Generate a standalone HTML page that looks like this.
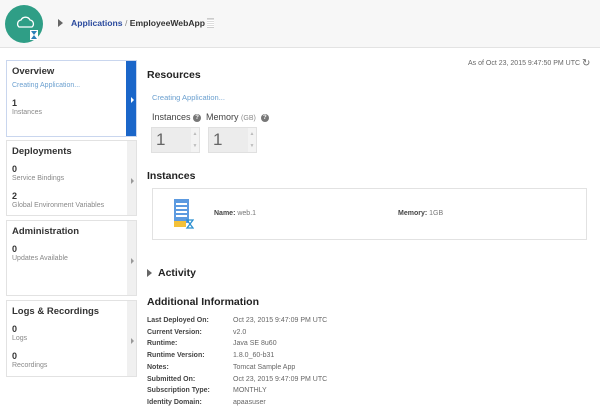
<!DOCTYPE html><html><head><style>
*{margin:0;padding:0;box-sizing:border-box}
body{width:600px;height:413px;overflow:hidden;background:#fff;font-family:"Liberation Sans",Arial,sans-serif;color:#333;position:relative}
.a{position:absolute;white-space:nowrap}
.hdr{position:absolute;left:0;top:0;width:600px;height:48px;background:#f7f7f7;border-bottom:1px solid #e3e3e3}
.card{position:absolute;left:6px;width:131px;border:1px solid #e2e2e2;background:#fff}
.card .strip{position:absolute;right:0;top:0;bottom:0;width:9px;background:#f0f0f0}
.ct{font-size:9.5px;font-weight:bold;color:#333}
.small{font-size:7px;color:#888}
.num{font-size:9px;font-weight:bold;color:#333}
.h{font-size:10.5px;font-weight:bold;color:#222}
.lab{font-size:7px;font-weight:bold;color:#444}
.val{font-size:7px;color:#666}
.spin{position:absolute;width:49px;height:26px;background:#ececec;border:1px solid #e0e0e0;font-size:17px;color:#666;padding:2px 4px}
.arr{position:absolute;right:0;top:0;width:8px;height:24px;background:#f3f3f3;font-size:5px;color:#bbb;text-align:center;line-height:12px}
.q{display:inline-block;width:8px;height:8px;border-radius:50%;background:#777;color:#fff;font-size:6px;text-align:center;line-height:8px;font-weight:bold;vertical-align:middle}
</style></head><body>
<div class="hdr"></div>
<div class="a" style="left:5px;top:5px;width:38px;height:38px;border-radius:50%;background:#2f9e86"></div>
<svg class="a" style="left:14px;top:14px" width="26" height="26" viewBox="0 0 26 26"><path d="M5 13a4 4 0 0 1 2-7a5 5 0 0 1 9 0a4 4 0 0 1 2 7z" fill="none" stroke="#fff" stroke-width="1.3"/><rect x="16" y="16" width="8" height="10" fill="#fff"/><path d="M17 17h6l-3 4l3 4h-6l3-4z" fill="#2a7fb8"/></svg>
<div class="a" style="left:58px;top:19px;width:0;height:0;border-left:5px solid #666;border-top:4px solid transparent;border-bottom:4px solid transparent"></div>
<div class="a" style="left:71px;top:18px;font-size:8.6px"><span style="color:#2a4a9e;font-weight:bold">Applications</span> <span style="color:#888">/</span> <b style="color:#333">EmployeeWebApp</b></div>
<div class="a" style="left:207px;top:18px;width:7px;height:10px;border-top:1px solid #ccc;border-bottom:1px solid #ccc;background:repeating-linear-gradient(#ddd 0 1px,#fff 1px 2px)"></div>

<div class="card" style="top:60px;height:77px;border-color:#c9d6ee"><div class="strip" style="background:#1a66c9;width:10px"></div>
<div class="a" style="right:2px;top:36px;border-left:3px solid #fff;border-top:3px solid transparent;border-bottom:3px solid transparent"></div>
<div class="a ct" style="left:5px;top:5px">Overview</div>
<div class="a small" style="left:5px;top:21px;color:#6a9fcf">Creating Application...</div>
<div class="a num" style="left:5px;top:37px">1</div>
<div class="a small" style="left:5px;top:48px">Instances</div></div>

<div class="card" style="top:140px;height:76px"><div class="strip"></div>
<div class="a" style="right:2px;top:37px;border-left:3px solid #999;border-top:3px solid transparent;border-bottom:3px solid transparent"></div>
<div class="a ct" style="left:5px;top:5px">Deployments</div>
<div class="a num" style="left:5px;top:23px">0</div>
<div class="a small" style="left:5px;top:34px">Service Bindings</div>
<div class="a num" style="left:5px;top:50px">2</div>
<div class="a small" style="left:5px;top:61px">Global Environment Variables</div></div>

<div class="card" style="top:220px;height:76px"><div class="strip"></div>
<div class="a" style="right:2px;top:37px;border-left:3px solid #999;border-top:3px solid transparent;border-bottom:3px solid transparent"></div>
<div class="a ct" style="left:5px;top:5px">Administration</div>
<div class="a num" style="left:5px;top:23px">0</div>
<div class="a small" style="left:5px;top:34px">Updates Available</div></div>

<div class="card" style="top:300px;height:77px"><div class="strip"></div>
<div class="a" style="right:2px;top:37px;border-left:3px solid #999;border-top:3px solid transparent;border-bottom:3px solid transparent"></div>
<div class="a ct" style="left:5px;top:5px">Logs &amp; Recordings</div>
<div class="a num" style="left:5px;top:23px">0</div>
<div class="a small" style="left:5px;top:34px">Logs</div>
<div class="a num" style="left:5px;top:50px">0</div>
<div class="a small" style="left:5px;top:61px">Recordings</div></div>

<div class="a" style="left:468px;top:60px;font-size:7px;color:#666">As of Oct 23, 2015 9:47:50 PM UTC</div>
<div class="a" style="left:582px;top:58px;font-size:10px;color:#666">&#x21bb;</div>
<div class="a h" style="left:147px;top:69px">Resources</div>
<div class="a" style="left:152px;top:93px;font-size:7.5px;color:#6a9fcf">Creating Application...</div>
<div class="a" style="left:152px;top:112px;font-size:9px;color:#444">Instances <span class="q">?</span>&nbsp; Memory <span style="font-size:7px;color:#888">(GB)</span> &nbsp;<span class="q">?</span></div>
<div class="spin" style="left:151px;top:127px">1<div class="arr">▲<br>▼</div></div>
<div class="spin" style="left:208px;top:127px">1<div class="arr">▲<br>▼</div></div>
<div class="a h" style="left:147px;top:170px">Instances</div>
<div class="a" style="left:152px;top:188px;width:435px;height:52px;border:1px solid #e2e2e2"></div>
<svg class="a" style="left:174px;top:199px" width="20" height="31" viewBox="0 0 20 31"><rect x="0" y="0" width="15" height="24" fill="#5c9ae0"/><g fill="#fff"><rect x="2" y="4" width="11" height="2"/><rect x="2" y="8" width="11" height="2"/><rect x="2" y="12" width="11" height="2"/><rect x="2" y="16" width="11" height="2"/></g><rect x="0" y="22" width="12" height="6" fill="#f3c13a"/><path d="M13 21h6l-3 4l3 4h-6l3-4z" fill="none" stroke="#2a8fd0" stroke-width="1.3"/></svg>
<div class="a" style="left:214px;top:210px;font-size:7px"><b style="color:#444">Name:</b> <span style="color:#777">web.1</span></div>
<div class="a" style="left:398px;top:210px;font-size:7px"><b style="color:#444">Memory:</b> <span style="color:#777">1GB</span></div>
<div class="a" style="left:147px;top:269px;border-left:5px solid #666;border-top:4px solid transparent;border-bottom:4px solid transparent"></div>
<div class="a h" style="left:158px;top:267px">Activity</div>
<div class="a h" style="left:147px;top:296px">Additional Information</div>
<div class="a lab" style="left:147px;top:315px;line-height:11.7px">Last Deployed On:<br>Current Version:<br>Runtime:<br>Runtime Version:<br>Notes:<br>Submitted On:<br>Subscription Type:<br>Identity Domain:</div>
<div class="a val" style="left:233px;top:315px;line-height:11.7px">Oct 23, 2015 9:47:09 PM UTC<br>v2.0<br>Java SE 8u60<br>1.8.0_60-b31<br>Tomcat Sample App<br>Oct 23, 2015 9:47:09 PM UTC<br>MONTHLY<br>apaasuser</div>
</body></html>
